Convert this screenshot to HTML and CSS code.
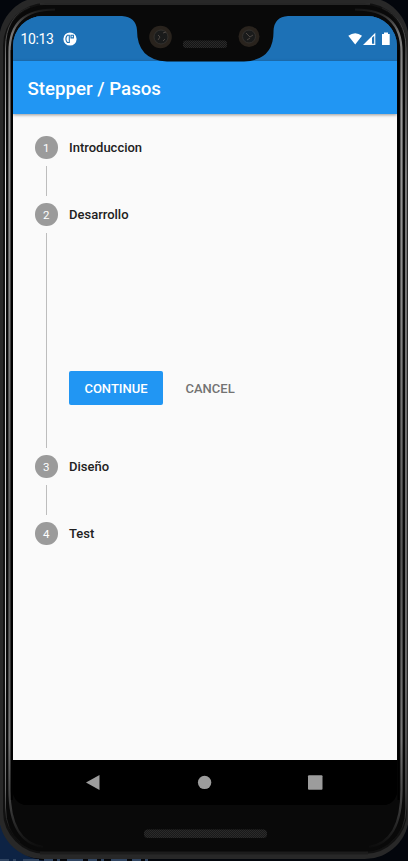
FILE: index.html
```html
<!DOCTYPE html>
<html lang="es">
<head>
<meta charset="utf-8">
<title>Stepper / Pasos</title>
<link rel="stylesheet" href="styles.css">
</head>
<body>
<div class="device">
  <svg class="frame" viewBox="0 0 408 861" fill="none" aria-hidden="true">
    <defs>
      <pattern id="mesh" width="2" height="2" patternUnits="userSpaceOnUse"><path d="M0 0h1v1H0zM1 1h1v1H1z" fill="#2a2a2a"/></pattern>
      <linearGradient id="metal" gradientUnits="userSpaceOnUse" x1="0" y1="8" x2="0" y2="848"><stop stop-color="#111"/><stop offset=".03" stop-color="#777"/><stop offset=".12" stop-color="#999"/><stop offset=".35" stop-color="#898989"/><stop offset=".65" stop-color="#555"/><stop offset=".87" stop-color="#777"/><stop offset=".96" stop-color="#333"/><stop offset="1" stop-color="#0b0b0b"/></linearGradient>
      <linearGradient id="shine" gradientUnits="userSpaceOnUse" x1="0" y1="8" x2="0" y2="848"><stop stop-color="#222"/><stop offset=".06" stop-color="#777"/><stop offset=".2" stop-color="#ddd"/><stop offset=".8" stop-color="#bbb"/><stop offset=".93" stop-color="#666"/><stop offset=".98" stop-color="#111"/></linearGradient>
    </defs>
    <path d="M0 817Q8 858 48 861H0z" fill="#0d2344"/>
    <path d="M0 860H150" stroke="#304562" stroke-width="2" stroke-dasharray="9 4 3 7 16 5"/>
    <rect x="-1" y="-3" width="410" height="862" rx="44" fill="#282828"/>
    <rect x="4" y="4" width="402" height="849" rx="42" fill="#090909" stroke="#111" stroke-width="2"/>
    <path d="M40 4H370" stroke="#3c3c3c"/>
    <path d="M30 7Q5.5 16 5.5 48V808Q5.5 830 20 842M382 8Q406 18 406 48V808Q406 830 391 842" stroke="url(#shine)"/>
    <path d="M55 9.5Q9.5 9 9.5 52V790Q9.5 842 43 847M355 9.5Q401.5 9 401.5 52V790Q401.5 842 369 847" stroke="url(#metal)" stroke-width="2.2"/>
    <path d="M11.8 50V800M398.5 50V800" stroke="#000" stroke-width="2"/>
    <path d="M40 853H368" stroke="#1c1c1c" stroke-width="3"/>
    <rect x="144" y="829.5" width="123" height="8.5" rx="4" fill="#191919"/>
    <rect x="144" y="829.5" width="123" height="8.5" rx="4" fill="url(#mesh)"/>
  </svg>
  <main class="screen">
    <header class="status">
      <time class="clock">10:13</time>
      <svg class="app" viewBox="0 0 14 14"><circle cx="7" cy="7" r="6.6" fill="#fff"/><path d="M6.3 3.2V10.5H4.4Q2.9 9 2.9 7T4.4 3.2zM8 3.2h2.4v2.7H8z" fill="none" stroke="#1d71b6" stroke-width="1.1"/></svg>
      <svg class="signals" viewBox="0 0 44 14" fill="#fff"><path d="M.3 3.8Q7.2-1.2 14 3.8L7.2 12.5zM15 13 27.3.8V13z"/><path d="M24 5.8 26.2 3.8V11.8H24z" fill="#1d71b6"/><path d="M34 2h2V.5h4V2h1.7v11H34z"/></svg>
    </header>
    <h1 class="appbar">Stepper / Pasos</h1>
    <ol class="stepper">
      <li class="step"><span class="num">1</span><span class="label">Introduccion</span></li>
      <li class="line"></li>
      <li class="step"><span class="num">2</span><span class="label">Desarrollo</span></li>
      <li class="line open"><div class="actions"><button class="primary">CONTINUE</button><button class="flat">CANCEL</button></div></li>
      <li class="step"><span class="num">3</span><span class="label">Diseño</span></li>
      <li class="line"></li>
      <li class="step"><span class="num">4</span><span class="label">Test</span></li>
    </ol>
    <nav class="nav">
      <svg viewBox="0 0 384 45" fill="#9c9c9c"><path d="M73 22.5 86.5 15v15z"/><circle cx="191.6" cy="22.4" r="6.7"/><rect x="295" y="15.2" width="14.5" height="14.5" rx="1"/></svg>
    </nav>
  </main>
  <svg class="notch" viewBox="0 0 166 46">
    <path d="M0 0H166Q152 1 151.5 15Q152 44 122 45.5H45Q15 44 15 14Q14 1 0 0Z" fill="#090909"/>
    <g fill="#29231d"><circle cx="38.5" cy="21" r="11.3"/><circle cx="127" cy="20.5" r="10.5"/></g>
    <g fill="#1a1b1b" stroke="#33312e"><circle cx="39" cy="21" r="7"/><circle cx="127" cy="20.5" r="6.5"/></g>
    <path d="m36 19 2 2-2 3m5-7 3-1m-3 9 2-2M124 17l4 4 3-2m-6 5 3-2" stroke="#4d4743" fill="none"/>
    <rect x="61" y="24.5" width="44" height="7.5" rx="3" fill="#141414"/><rect x="61" y="24.5" width="44" height="7.5" rx="3" fill="url(#mesh)"/>
  </svg>
</div>
</body>
</html>
```
FILE: styles.css
```css
* { box-sizing: border-box; }
body { margin: 0; background: #03060c; font-family: Roboto, "Liberation Sans", sans-serif; }
.device { position: relative; width: 408px; height: 861px; padding: 16px 11px 56px 13px; overflow: hidden; }
.frame { position: absolute; inset: 0; width: 408px; height: 861px; }
.screen { position: relative; display: flex; flex-direction: column; width: 384px; height: 789px; background: linear-gradient(#1d71b6 50px, #fafafa 50px 700px, #000 700px); border-radius: 30px 30px 14px 14px; overflow: hidden; }
.notch { position: absolute; left: 122px; top: 16px; width: 166px; height: 46px; }
.status { display: flex; align-items: center; height: 45px; padding: 1px 5px 0 7.5px; background: #1d71b6; color: #fff; }
.clock { width: 42.5px; font-size: 14px; line-height: 20px; letter-spacing: -0.4px; white-space: nowrap; }
.app { width: 14px; height: 14px; }
.signals { width: 44px; height: 14px; margin-left: auto; }
.appbar { position: relative; flex: none; height: 53px; margin: 0; padding-left: 14.5px; background: #2196f3; color: #fff; font-size: 18.7px; font-weight: 500; line-height: 56px; box-shadow: 0 1px 3px rgba(0,0,0,.4); }
.stepper { flex: 1; margin: 0; padding: 22px 22px 0; list-style: none; background: #fafafa; }
.step { display: flex; align-items: center; height: 23px; gap: 11.5px; }
.num { display: grid; place-items: center; width: 22.5px; height: 22.5px; border-radius: 50%; background: #9b9b9b; color: #fff; font-size: 11.5px; line-height: 22px; }
.label { color: #212121; font-size: 13px; font-weight: 500; line-height: 20px; }
.line { width: 1px; height: 30px; margin: 7px 0 7px 11px; background: #bdbdbd; }
.line.open { height: 215px; padding-top: 138px; }
.actions { display: flex; width: 190px; margin-left: 23px; gap: 8.5px; }
button { height: 34px; padding: 2px 14px 0; border: 0; border-radius: 2px; font: 500 13px/32px Roboto, "Liberation Sans", sans-serif; }
.primary { width: 94px; background: #2196f3; color: #fff; }
.flat { background: none; color: #737373; }
.nav { height: 45px; background: #000; }
.nav svg { display: block; width: 384px; height: 45px; }
```
